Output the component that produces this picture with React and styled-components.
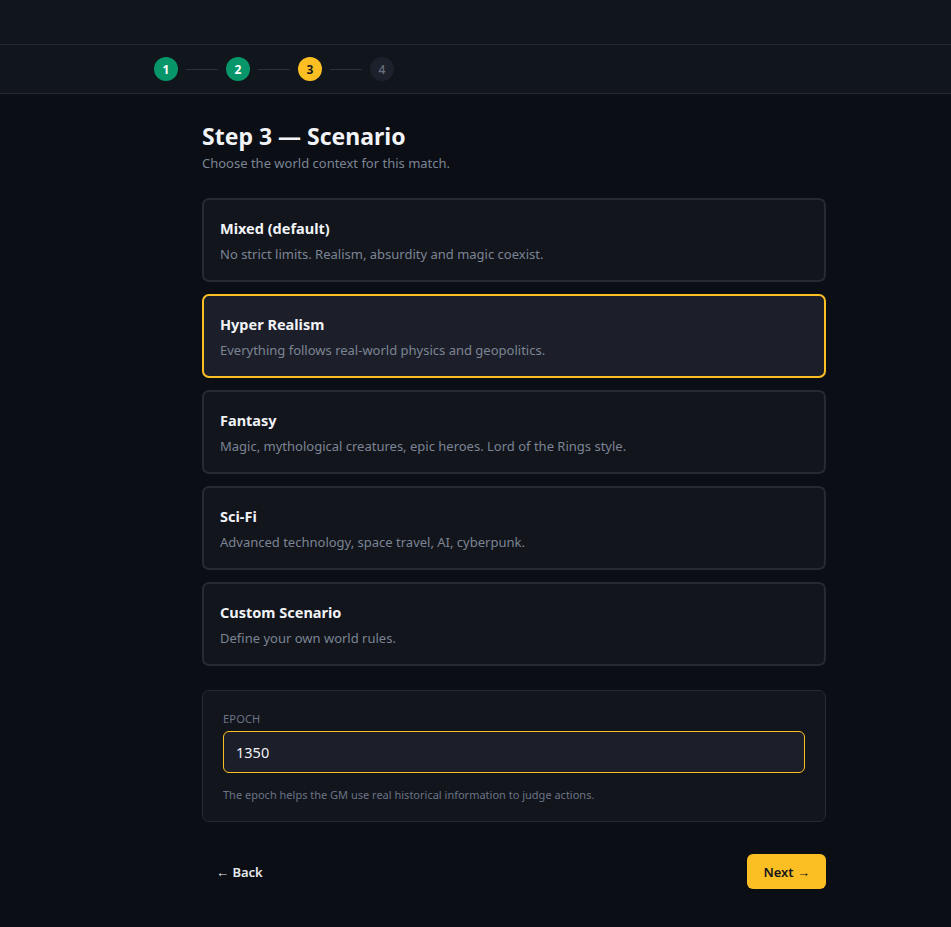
import React, { useState } from "react";
import styled, { createGlobalStyle } from "styled-components";

const Global = createGlobalStyle`
  html, body { margin: 0; padding: 0; background: #0b0e14; }
  body { font-family: "Noto Sans", "Open Sans", sans-serif; color: #e6e8ee; }
  * { box-sizing: border-box; }
`;

const Page = styled.div`
  min-height: 927px;
  background: #0b0e14;
`;

const TopBar = styled.header`
  height: 45px;
  background: #11151c;
  border-bottom: 1px solid #262a33;
`;

const StepBar = styled.nav`
  height: 49px;
  background: #11151c;
  border-bottom: 1px solid #262a33;
  display: flex;
  align-items: center;
  padding-left: 154px;
`;

const Dot = styled.div`
  width: 24px;
  height: 24px;
  border-radius: 50%;
  display: flex;
  align-items: center;
  justify-content: center;
  font-size: 12px;
  background: ${(p) => (p.$state === "done" ? "#069669" : p.$state === "active" ? "#fbbf24" : "#1d212b")};
  color: ${(p) => (p.$state === "done" ? "#ffffff" : p.$state === "active" ? "#1a1a1a" : "#6b7280")};
  font-weight: ${(p) => (p.$state === "todo" ? 500 : 700)};
`;

const Line = styled.div`
  width: 32px;
  height: 1px;
  margin: 0 8px;
  background: #2c3039;
`;

const Main = styled.main`
  width: 624px;
  margin-left: 202px;
  padding-top: 26px;
`;

const Title = styled.h1`
  margin: 0;
  font-size: 23px;
  font-weight: 700;
  color: #f1f3f7;
  line-height: 32px;
`;

const Subtitle = styled.p`
  margin: 2px 0 0;
  font-size: 13px;
  color: #7c8494;
  line-height: 18px;
`;

const Options = styled.div`
  margin-top: 26px;
  display: flex;
  flex-direction: column;
  gap: 12px;
`;

const Option = styled.button`
  width: 100%;
  height: 84px;
  margin: 0;
  padding: 18px 16px 0;
  text-align: left;
  font-family: inherit;
  border-radius: 7px;
  cursor: pointer;
  background: ${(p) => (p.$selected ? "#1c1f29" : "#12151c")};
  border: ${(p) => (p.$selected ? "2px solid #fbbf24" : "2px solid #262a33")};
  display: flex;
  flex-direction: column;
  justify-content: flex-start;
`;

const OptionTitle = styled.div`
  font-size: 14.5px;
  font-weight: 700;
  color: #f1f3f7;
  line-height: 20px;
`;

const OptionDesc = styled.div`
  margin-top: 7px;
  font-size: 13px;
  color: #7c8494;
  line-height: 18px;
`;

const EpochBox = styled.section`
  margin-top: 24px;
  background: #12151c;
  border: 1px solid #262a33;
  border-radius: 7px;
  padding: 21px 20px 19px;
`;

const Label = styled.label`
  display: block;
  font-size: 11px;
  color: #6b7486;
  letter-spacing: 0.2px;
  line-height: 14px;
  text-transform: uppercase;
`;

const Input = styled.input`
  display: block;
  width: 100%;
  height: 42px;
  margin-top: 5px;
  padding: 0 12px;
  background: #1c1f29;
  border: 1px solid #fbbf24;
  border-radius: 6px;
  color: #f1f3f7;
  font-family: inherit;
  font-size: 14.5px;
  outline: none;
`;

const Help = styled.p`
  margin: 15px 0 0;
  font-size: 11px;
  color: #6b7486;
  line-height: 14px;
`;

const Footer = styled.div`
  margin-top: 32px;
  display: flex;
  justify-content: space-between;
  align-items: center;
`;

const BackButton = styled.button`
  background: none;
  border: none;
  color: #e6e8ee;
  font-family: inherit;
  font-size: 13px;
  font-weight: 600;
  padding: 0 14px;
  height: 35px;
  cursor: pointer;
`;

const NextButton = styled.button`
  background: #fbbf24;
  border: none;
  border-radius: 6px;
  color: #14161c;
  font-family: inherit;
  font-size: 13px;
  font-weight: 600;
  height: 35px;
  padding: 0 16px;
  cursor: pointer;
`;

const steps = [
  { n: 1, s: "done" },
  { n: 2, s: "done" },
  { n: 3, s: "active" },
  { n: 4, s: "todo" },
];

const options = [
  { t: "Mixed (default)", d: "No strict limits. Realism, absurdity and magic coexist." },
  { t: "Hyper Realism", d: "Everything follows real-world physics and geopolitics." },
  { t: "Fantasy", d: "Magic, mythological creatures, epic heroes. Lord of the Rings style." },
  { t: "Sci-Fi", d: "Advanced technology, space travel, AI, cyberpunk." },
  { t: "Custom Scenario", d: "Define your own world rules." },
];

export default function App() {
  const [sel, setSel] = useState(1);
  const [epoch, setEpoch] = useState("1350");
  return (
    <Page>
      <Global />
      <TopBar />
      <StepBar>
        {steps.map((st, i) => (
          <React.Fragment key={st.n}>
            {i > 0 && <Line />}
            <Dot $state={st.s}>{st.n}</Dot>
          </React.Fragment>
        ))}
      </StepBar>
      <Main>
        <Title>Step 3 — Scenario</Title>
        <Subtitle>Choose the world context for this match.</Subtitle>
        <Options>
          {options.map((o, i) => (
            <Option key={o.t} $selected={sel === i} onClick={() => setSel(i)}>
              <OptionTitle>{o.t}</OptionTitle>
              <OptionDesc>{o.d}</OptionDesc>
            </Option>
          ))}
        </Options>
        <EpochBox>
          <Label htmlFor="epoch">Epoch</Label>
          <Input id="epoch" value={epoch} onChange={(e) => setEpoch(e.target.value)} />
          <Help>The epoch helps the GM use real historical information to judge actions.</Help>
        </EpochBox>
        <Footer>
          <BackButton>← Back</BackButton>
          <NextButton>Next →</NextButton>
        </Footer>
      </Main>
    </Page>
  );
}
